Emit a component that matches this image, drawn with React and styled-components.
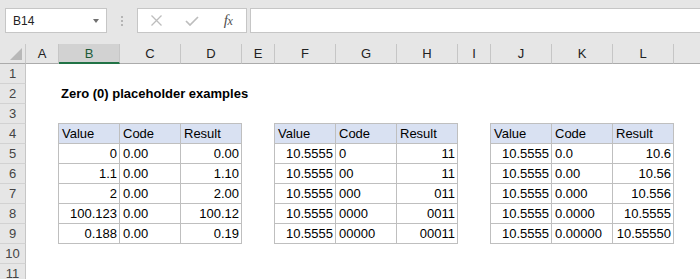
import React from "react";
import styled, { createGlobalStyle } from "styled-components";

const GlobalStyle = createGlobalStyle`
  html, body {
    margin: 0;
    padding: 0;
    background: #ffffff;
  }
  body {
    font-family: "Liberation Sans", Arial, sans-serif;
  }
`;

/* Window frame */

const Shell = styled.div`
  width: 700px;
  height: 279px;
  overflow: hidden;
  background: #ffffff;
`;

/* Formula bar with name box, buttons and input */

const FormulaBar = styled.div`
  height: 44px;
  box-sizing: border-box;
  padding: 8px 0 0 5px;
  display: flex;
  align-items: flex-start;
  background: #e6e6e6;
`;

const NameBox = styled.div`
  width: 102px;
  height: 25px;
  box-sizing: border-box;
  border: 1px solid #c6c6c6;
  background: #ffffff;
  display: flex;
  align-items: center;
  justify-content: space-between;
  padding: 0 7px 0 7px;
  font-size: 12px;
  color: #222222;
`;

const Arrow = styled.span`
  width: 0;
  height: 0;
  border-left: 3.5px solid transparent;
  border-right: 3.5px solid transparent;
  border-top: 4px solid #707070;
`;

const Grip = styled.div`
  width: 30px;
  height: 25px;
  display: flex;
  flex-direction: column;
  align-items: center;
  justify-content: center;
  gap: 2px;

  span {
    width: 2px;
    height: 2px;
    background: #b5b5b5;
  }
`;

const FuncBox = styled.div`
  width: 110px;
  height: 25px;
  box-sizing: border-box;
  border: 1px solid #c6c6c6;
  background: #ffffff;
  display: grid;
  grid-template-columns: repeat(3, 18px);
  column-gap: 18px;
  align-items: center;
  justify-items: center;
  padding-left: 9px;
`;

const Fx = styled.span`
  font-family: "Liberation Serif", "Times New Roman", serif;
  font-style: italic;
  font-size: 15px;
  color: #505050;
  letter-spacing: -0.5px;

  small {
    font-size: 12px;
  }
`;

const FormulaInput = styled.div`
  flex: 1;
  height: 25px;
  box-sizing: border-box;
  margin-left: 3px;
  border: 1px solid #c6c6c6;
  border-right: none;
  background: #ffffff;
`;

/* Worksheet grid */

const Sheet = styled.div`
  display: grid;
  grid-template-columns: 26px 33px repeat(3, 61px) 33px repeat(3, 61px) 33px repeat(4, 61px);
  grid-template-rows: repeat(12, 20px);
  width: max-content;
  font-size: 13px;
  color: #000000;
`;

const Corner = styled.div`
  grid-column: 1;
  grid-row: 1;
  box-sizing: border-box;
  background: #e6e6e6;
  border-right: 1px solid #c8c8c8;
  border-bottom: 1px solid #ababab;
  display: flex;
  justify-content: flex-end;
  align-items: flex-end;
  padding: 0 3px 3px 0;

  span {
    width: 0;
    height: 0;
    border-left: 12px solid transparent;
    border-bottom: 12px solid #b8b8b8;
  }
`;

const ColHeader = styled.div`
  grid-row: 1;
  box-sizing: border-box;
  background: ${(p) => (p.$active ? "#d2d2d2" : "#e6e6e6")};
  border-right: 1px solid #c6c6c6;
  border-bottom: ${(p) => (p.$active ? "2px solid #217346" : "1px solid #ababab")};
  text-align: center;
  line-height: 19px;
  color: ${(p) => (p.$active ? "#1d5b38" : "#222222")};
`;

const RowHeader = styled.div`
  grid-column: 1;
  box-sizing: border-box;
  background: #e6e6e6;
  border-right: 1px solid #c6c6c6;
  border-bottom: 1px solid #d2d2d2;
  text-align: center;
  line-height: 19px;
  color: #444444;
`;

const Title = styled.div`
  grid-column: 3 / span 4;
  grid-row: 3;
  padding-left: 2px;
  font-weight: bold;
  line-height: 19px;
  white-space: nowrap;
`;

/* Bordered example table */

const Table = styled.div`
  grid-column: ${(p) => p.$col} / span 3;
  grid-row: 5 / span 6;
  align-self: start;
  justify-self: start;
  margin: -1px 0 0 -1px;
  display: grid;
  grid-template-columns: repeat(3, 61px);
  border-top: 1px solid #bfbfbf;
  border-left: 1px solid #bfbfbf;
`;

const Cell = styled.div`
  height: 20px;
  box-sizing: border-box;
  border-right: 1px solid #bfbfbf;
  border-bottom: 1px solid #bfbfbf;
  padding: 1px 2px 0 3px;
  line-height: 18px;
  text-align: ${(p) => p.$align || "left"};
  background: ${(p) => (p.$head ? "#d9e1f2" : "#ffffff")};
  white-space: nowrap;
  overflow: hidden;
`;

/* Only A-L carry a letter; the next column is cut by the window */
const letters = ["A", "B", "C", "D", "E", "F", "G", "H", "I", "J", "K", "L", ""];

const tables = [
  {
    col: 3,
    rows: [
      ["0", "0.00", "0.00"],
      ["1.1", "0.00", "1.10"],
      ["2", "0.00", "2.00"],
      ["100.123", "0.00", "100.12"],
      ["0.188", "0.00", "0.19"],
    ],
  },
  {
    col: 7,
    rows: [
      ["10.5555", "0", "11"],
      ["10.5555", "00", "11"],
      ["10.5555", "000", "011"],
      ["10.5555", "0000", "0011"],
      ["10.5555", "00000", "00011"],
    ],
  },
  {
    col: 11,
    rows: [
      ["10.5555", "0.0", "10.6"],
      ["10.5555", "0.00", "10.56"],
      ["10.5555", "0.000", "10.556"],
      ["10.5555", "0.0000", "10.5555"],
      ["10.5555", "0.00000", "10.55550"],
    ],
  },
];

function ExampleTable({ col, rows }) {
  return (
    <Table $col={col}>
      <Cell $head>Value</Cell>
      <Cell $head>Code</Cell>
      <Cell $head>Result</Cell>
      {rows.map((r, i) => (
        <React.Fragment key={i}>
          <Cell $align="right">{r[0]}</Cell>
          <Cell>{r[1]}</Cell>
          <Cell $align="right">{r[2]}</Cell>
        </React.Fragment>
      ))}
    </Table>
  );
}

export default function App() {
  return (
    <Shell>
      <GlobalStyle />
      <FormulaBar>
        <NameBox>
          <span>B14</span>
          <Arrow />
        </NameBox>
        <Grip>
          <span />
          <span />
          <span />
        </Grip>
        <FuncBox>
          <svg width="11" height="11" viewBox="0 0 11 11">
            <path d="M0.5 0.5 L10.5 10.5 M10.5 0.5 L0.5 10.5" stroke="#bdbdbd" strokeWidth="1.3" fill="none" />
          </svg>
          <svg width="14" height="10" viewBox="0 0 14 10">
            <path d="M1 5 L5 9 L13 1" stroke="#bdbdbd" strokeWidth="1.7" fill="none" />
          </svg>
          <Fx>
            f<small>x</small>
          </Fx>
        </FuncBox>
        <FormulaInput />
      </FormulaBar>
      <Sheet>
        <Corner>
          <span />
        </Corner>
        {letters.map((l, i) => (
          <ColHeader key={i} $active={l === "B"} style={{ gridColumn: i + 2 }}>
            {l}
          </ColHeader>
        ))}
        {Array.from({ length: 11 }, (_, i) => (
          <RowHeader key={i} style={{ gridRow: i + 2 }}>
            {i + 1}
          </RowHeader>
        ))}
        <Title>Zero (0) placeholder examples</Title>
        {tables.map((t) => (
          <ExampleTable key={t.col} col={t.col} rows={t.rows} />
        ))}
      </Sheet>
    </Shell>
  );
}
